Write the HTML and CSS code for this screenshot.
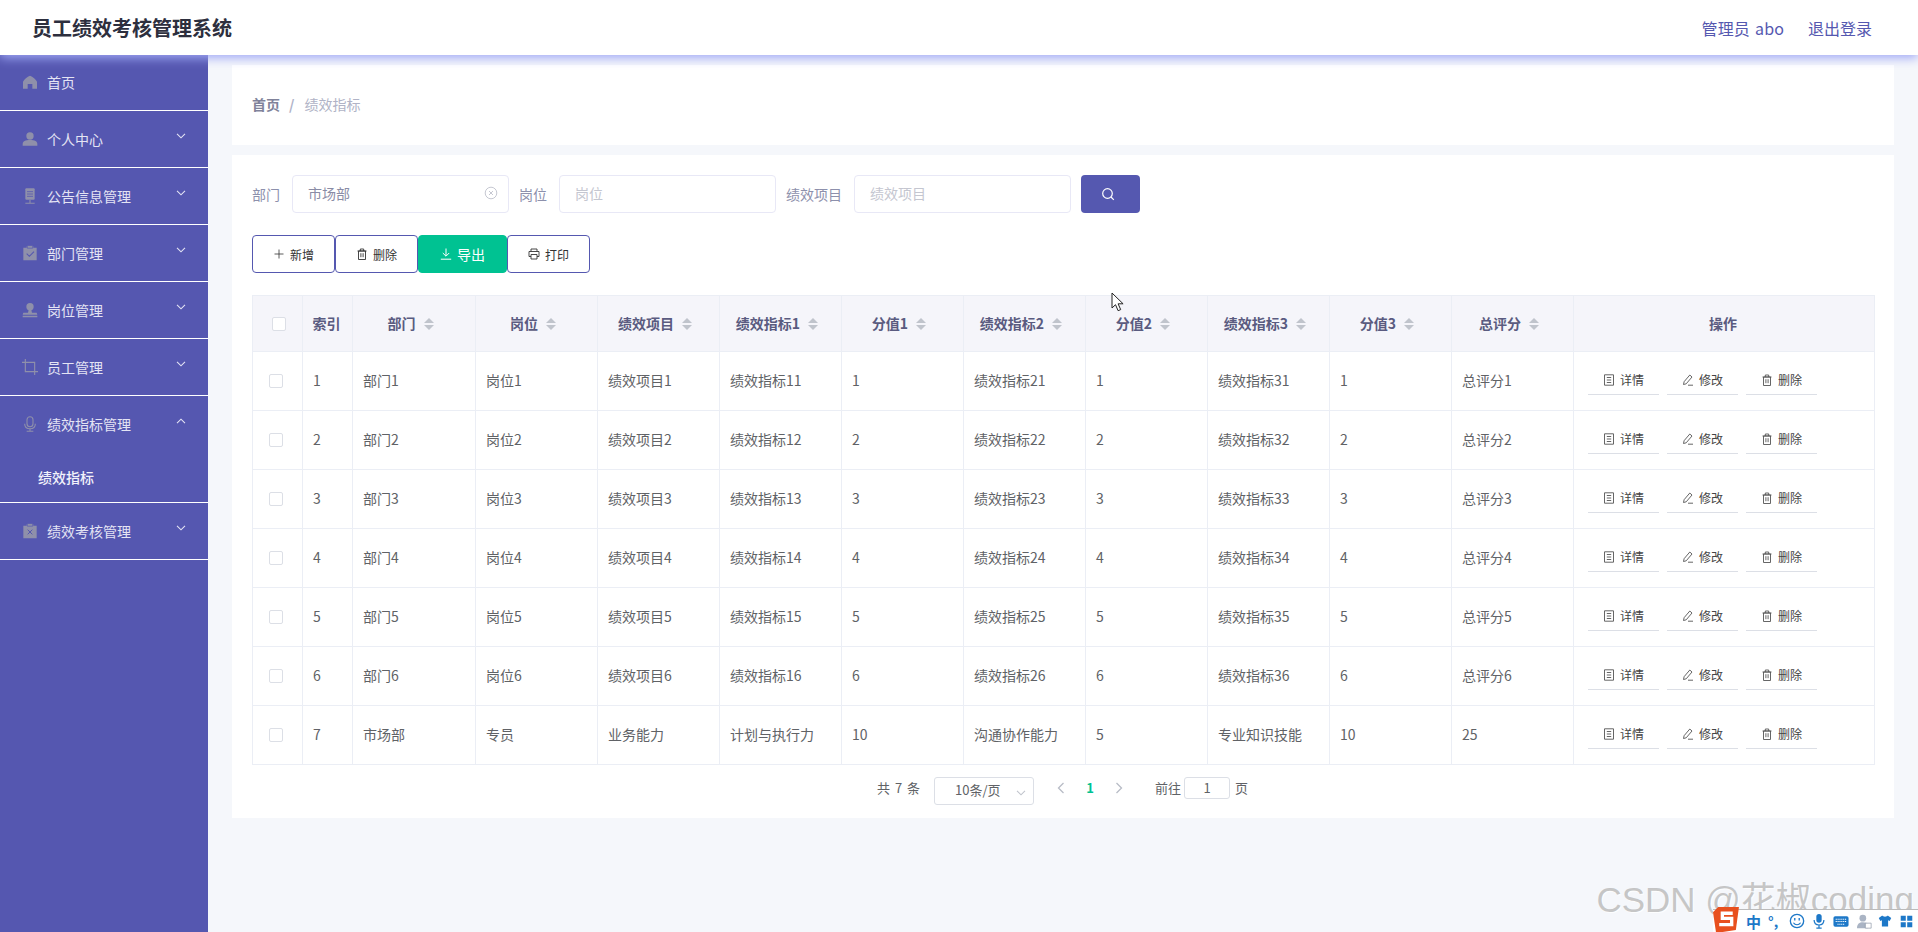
FILE: index.html
```html
<!DOCTYPE html>
<html lang="zh-CN">
<head>
<meta charset="utf-8">
<title>员工绩效考核管理系统</title>
<link rel="stylesheet" href="styles.css">
</head>
<body>
<svg class="defs" width="0" height="0" aria-hidden="true">
  <symbol id="i-home" viewBox="0 0 24 24"><path d="M12 2.500C8 4 3 8 1.500 11.500V22h7v-7h7v7h7V11.500C21 8 16 4 12 2.500z" fill="currentColor"/></symbol>
  <symbol id="i-user" viewBox="0 0 24 24"><circle cx="12" cy="7.500" r="5.500" fill="currentColor"/><path d="M1 22v-2.500C1 15.500 5 13.500 12 13.500s11 2 11 6V22z" fill="currentColor"/></symbol>
  <symbol id="i-mic1" viewBox="0 0 24 24"><path d="M6.500 0.500h11a1.500 1.500 0 0 1 1.500 1.500v14a1.500 1.500 0 0 1-1.500 1.500h-11A1.500 1.500 0 0 1 5 16V2a1.500 1.500 0 0 1 1.500-1.500z" fill="currentColor"/><path d="M7.500 5.500h9M7.500 9h9M7.500 12.500h9" stroke="#5557b0" stroke-width="1.200"/><path d="M12 18v4M5 23h14" stroke="currentColor" stroke-width="1.600" fill="none"/></symbol>
  <symbol id="i-claim" viewBox="0 0 24 24"><path d="M2 4h5V2h10v2h5v19H2z" fill="currentColor"/><path d="M8 0.800h8v4H8z" fill="currentColor" stroke="#5557b0" stroke-width="1"/><path d="M7 13l4 4 7-7" stroke="#5557b0" stroke-width="1.600" fill="none"/></symbol>
  <symbol id="i-custom" viewBox="0 0 24 24"><circle cx="12" cy="7" r="5.500" fill="currentColor"/><path d="M10 12h4l1 4h7l1 3H1l1-3h7zM1 20.500h22V23H1z" fill="currentColor"/></symbol>
  <symbol id="i-crop" viewBox="0 0 24 24"><path d="M5 0v19h19M0 5h19v19" stroke="currentColor" stroke-width="1.700" fill="none"/></symbol>
  <symbol id="i-mic2" viewBox="0 0 24 24"><rect x="7.500" y="1" width="9" height="15" rx="4.500" fill="none" stroke="currentColor" stroke-width="1.600"/><path d="M4 11.500c0 5 3.500 7.500 8 7.500s8-2.500 8-7.500M12 19v4M7 23h10" fill="none" stroke="currentColor" stroke-width="1.600"/></symbol>
  <symbol id="i-release" viewBox="0 0 24 24"><path d="M2 4h5V2h10v2h5v19H2z" fill="currentColor"/><path d="M8 0.800h8v4H8z" fill="currentColor" stroke="#5557b0" stroke-width="1"/><path d="M8.500 10l7 7M15.500 10l-7 7" stroke="#5557b0" stroke-width="1.500"/></symbol>
  <symbol id="i-down" viewBox="0 0 10 6"><path d="M1 .800l4 4 4-4" fill="none" stroke="currentColor" stroke-width="1.100"/></symbol>
  <symbol id="i-up" viewBox="0 0 10 6"><path d="M1 5.200l4-4 4 4" fill="none" stroke="currentColor" stroke-width="1.100"/></symbol>
  <symbol id="i-plus" viewBox="0 0 12 12"><path d="M6 1.500v9M1.500 6h9" stroke="currentColor" stroke-width=".8" fill="none"/></symbol>
  <symbol id="i-trash" viewBox="0 0 12 12"><path d="M2.500 3h7v8.500h-7zM1.500 3h9M4.300 3V1h3.400v2M4.900 5.200v4M7.100 5.200v4" stroke="currentColor" stroke-width=".9" fill="none"/></symbol>
  <symbol id="i-export" viewBox="0 0 12 12"><path d="M6 .500v7.500M2.800 5l3.200 3.200L9.200 5M.800 11.200h10.400" stroke="currentColor" fill="none"/></symbol>
  <symbol id="i-print" viewBox="0 0 12 12"><path d="M3 3.500V1h6v2.500M3 8.500H1V3.500h10v5H9M3 6.500h6v4.500H3z" stroke="currentColor" stroke-width=".9" fill="none"/></symbol>
  <symbol id="i-doc" viewBox="0 0 12 12"><path d="M1.500 .800h9v10.400h-9zM3.800 3.500h4.400M3.800 6h4.400M3.800 8.500h4.400" stroke="currentColor" stroke-width=".9" fill="none"/></symbol>
  <symbol id="i-edit" viewBox="0 0 12 12"><path d="M7.800 1l2.200 2L4.200 9.800 1.500 10.500l.6-2.800zM6 11.200h5" stroke="currentColor" stroke-width=".9" fill="none"/></symbol>
  <symbol id="i-clear" viewBox="0 0 14 14"><circle cx="7" cy="7" r="5.800" fill="none" stroke="currentColor"/><path d="M5 5l4 4M9 5l-4 4" stroke="currentColor"/></symbol>
  <symbol id="i-search" viewBox="0 0 14 14"><circle cx="6.500" cy="6.500" r="4.800" fill="none" stroke="currentColor" stroke-width="1.200"/><path d="M10 10l2.800 2.800" stroke="currentColor" stroke-width="1.200"/></symbol>
  <symbol id="i-left" viewBox="0 0 8 12"><path d="M6.500 1L1.500 6l5 5" fill="none" stroke="currentColor" stroke-width="1.300"/></symbol>
  <symbol id="i-right" viewBox="0 0 8 12"><path d="M1.500 1l5 5-5 5" fill="none" stroke="currentColor" stroke-width="1.300"/></symbol>
</svg>

<div class="app">
  <header class="topbar">
    <div class="brand">员工绩效考核管理系统</div>
    <nav class="top-links"><span class="who">管理员 abo</span><span>退出登录</span></nav>
  </header>

  <div class="body-row">
    <aside class="sidebar">
      <div class="menu-item first"><svg class="m-icon"><use href="#i-home"/></svg><span>首页</span></div>
      <div class="menu-item"><svg class="m-icon"><use href="#i-user"/></svg><span>个人中心</span><svg class="chev"><use href="#i-down"/></svg></div>
      <div class="menu-item"><svg class="m-icon"><use href="#i-mic1"/></svg><span>公告信息管理</span><svg class="chev"><use href="#i-down"/></svg></div>
      <div class="menu-item"><svg class="m-icon"><use href="#i-claim"/></svg><span>部门管理</span><svg class="chev"><use href="#i-down"/></svg></div>
      <div class="menu-item"><svg class="m-icon"><use href="#i-custom"/></svg><span>岗位管理</span><svg class="chev"><use href="#i-down"/></svg></div>
      <div class="menu-item"><svg class="m-icon"><use href="#i-crop"/></svg><span>员工管理</span><svg class="chev"><use href="#i-down"/></svg></div>
      <div class="menu-group">
        <div class="menu-item open"><svg class="m-icon"><use href="#i-mic2"/></svg><span>绩效指标管理</span><svg class="chev"><use href="#i-up"/></svg></div>
        <div class="sub-item">绩效指标</div>
      </div>
      <div class="menu-item"><svg class="m-icon"><use href="#i-release"/></svg><span>绩效考核管理</span><svg class="chev"><use href="#i-down"/></svg></div>
    </aside>

    <main class="main">
      <section class="crumbs card">
        <span class="crumb-home">首页</span><span class="crumb-sep">/</span><span class="crumb-cur">绩效指标</span>
      </section>

      <section class="panel card">
        <div class="search-row">
          <label class="s-label">部门</label>
          <div class="s-input filled">市场部<svg class="clear"><use href="#i-clear"/></svg></div>
          <label class="s-label">岗位</label>
          <div class="s-input">岗位</div>
          <label class="s-label">绩效项目</label>
          <div class="s-input">绩效项目</div>
          <div class="search-btn"><svg class="search-ic"><use href="#i-search"/></svg></div>
        </div>

        <div class="action-row">
          <div class="btn w83"><svg class="b-ic"><use href="#i-plus"/></svg>新增</div>
          <div class="btn w83"><svg class="b-ic"><use href="#i-trash"/></svg>删除</div>
          <div class="btn w89 green"><svg class="b-ic"><use href="#i-export"/></svg>导出</div>
          <div class="btn w83"><svg class="b-ic"><use href="#i-print"/></svg>打印</div>
        </div>

        <table class="grid">
          <colgroup><col class="c-50"><col class="c-50"><col class="c-123"><col class="c-122"><col class="c-122"><col class="c-122"><col class="c-122"><col class="c-122"><col class="c-122"><col class="c-122"><col class="c-122"><col class="c-122"><col class="c-301"></colgroup>
          <thead>
            <tr>
              <th><i class="check head"></i></th>
              <th class="th-plain">索引</th>
              <th>部门<i class="sort"></i></th>
              <th>岗位<i class="sort"></i></th>
              <th>绩效项目<i class="sort"></i></th>
              <th>绩效指标1<i class="sort"></i></th>
              <th>分值1<i class="sort"></i></th>
              <th>绩效指标2<i class="sort"></i></th>
              <th>分值2<i class="sort"></i></th>
              <th>绩效指标3<i class="sort"></i></th>
              <th>分值3<i class="sort"></i></th>
              <th>总评分<i class="sort"></i></th>
              <th class="th-plain">操作</th>
            </tr>
          </thead>
          <tbody>
            <tr><td class="cc"><i class="check"></i></td><td class="ci">1</td><td>部门1</td><td>岗位1</td><td>绩效项目1</td><td>绩效指标11</td><td>1</td><td>绩效指标21</td><td>1</td><td>绩效指标31</td><td>1</td><td>总评分1</td><td class="ops"><span class="op"><svg class="op-ic"><use href="#i-doc"/></svg>详情</span><span class="op"><svg class="op-ic"><use href="#i-edit"/></svg>修改</span><span class="op"><svg class="op-ic"><use href="#i-trash"/></svg>删除</span></td></tr>
            <tr><td class="cc"><i class="check"></i></td><td class="ci">2</td><td>部门2</td><td>岗位2</td><td>绩效项目2</td><td>绩效指标12</td><td>2</td><td>绩效指标22</td><td>2</td><td>绩效指标32</td><td>2</td><td>总评分2</td><td class="ops"><span class="op"><svg class="op-ic"><use href="#i-doc"/></svg>详情</span><span class="op"><svg class="op-ic"><use href="#i-edit"/></svg>修改</span><span class="op"><svg class="op-ic"><use href="#i-trash"/></svg>删除</span></td></tr>
            <tr><td class="cc"><i class="check"></i></td><td class="ci">3</td><td>部门3</td><td>岗位3</td><td>绩效项目3</td><td>绩效指标13</td><td>3</td><td>绩效指标23</td><td>3</td><td>绩效指标33</td><td>3</td><td>总评分3</td><td class="ops"><span class="op"><svg class="op-ic"><use href="#i-doc"/></svg>详情</span><span class="op"><svg class="op-ic"><use href="#i-edit"/></svg>修改</span><span class="op"><svg class="op-ic"><use href="#i-trash"/></svg>删除</span></td></tr>
            <tr><td class="cc"><i class="check"></i></td><td class="ci">4</td><td>部门4</td><td>岗位4</td><td>绩效项目4</td><td>绩效指标14</td><td>4</td><td>绩效指标24</td><td>4</td><td>绩效指标34</td><td>4</td><td>总评分4</td><td class="ops"><span class="op"><svg class="op-ic"><use href="#i-doc"/></svg>详情</span><span class="op"><svg class="op-ic"><use href="#i-edit"/></svg>修改</span><span class="op"><svg class="op-ic"><use href="#i-trash"/></svg>删除</span></td></tr>
            <tr><td class="cc"><i class="check"></i></td><td class="ci">5</td><td>部门5</td><td>岗位5</td><td>绩效项目5</td><td>绩效指标15</td><td>5</td><td>绩效指标25</td><td>5</td><td>绩效指标35</td><td>5</td><td>总评分5</td><td class="ops"><span class="op"><svg class="op-ic"><use href="#i-doc"/></svg>详情</span><span class="op"><svg class="op-ic"><use href="#i-edit"/></svg>修改</span><span class="op"><svg class="op-ic"><use href="#i-trash"/></svg>删除</span></td></tr>
            <tr><td class="cc"><i class="check"></i></td><td class="ci">6</td><td>部门6</td><td>岗位6</td><td>绩效项目6</td><td>绩效指标16</td><td>6</td><td>绩效指标26</td><td>6</td><td>绩效指标36</td><td>6</td><td>总评分6</td><td class="ops"><span class="op"><svg class="op-ic"><use href="#i-doc"/></svg>详情</span><span class="op"><svg class="op-ic"><use href="#i-edit"/></svg>修改</span><span class="op"><svg class="op-ic"><use href="#i-trash"/></svg>删除</span></td></tr>
            <tr><td class="cc"><i class="check"></i></td><td class="ci">7</td><td>市场部</td><td>专员</td><td>业务能力</td><td>计划与执行力</td><td>10</td><td>沟通协作能力</td><td>5</td><td>专业知识技能</td><td>10</td><td>25</td><td class="ops"><span class="op"><svg class="op-ic"><use href="#i-doc"/></svg>详情</span><span class="op"><svg class="op-ic"><use href="#i-edit"/></svg>修改</span><span class="op"><svg class="op-ic"><use href="#i-trash"/></svg>删除</span></td></tr>
          </tbody>
        </table>

        <div class="pager">
          <span class="p-total">共 7 条</span>
          <div class="p-select">10条/页<svg class="p-arrow"><use href="#i-down"/></svg></div>
          <svg class="p-nav"><use href="#i-left"/></svg>
          <span class="p-num">1</span>
          <svg class="p-nav"><use href="#i-right"/></svg>
          <span class="p-goto">前往</span>
          <div class="p-input">1</div>
          <span class="p-page">页</span>
        </div>
      </section>
    </main>
  </div>
</div>

<svg class="cursor" viewBox="0 0 13 20"><path d="M1 1v15l3.500-3.300 2.600 6 2.600-1.100-2.600-5.800h5z" fill="#fff" stroke="#222" stroke-width="1"/></svg>

<div class="watermark">CSDN @花椒coding</div>

<div class="ime">
  <svg class="ime-logo" viewBox="0 0 26 26"><path d="M5 1h20l-3 22-19 3L0 6z" fill="#e8501e"/><path d="M19 7H9v5h9v6H6" fill="none" stroke="#fff" stroke-width="3.200"/></svg>
  <span class="ime-zh">中</span>
  <span class="ime-p">°,</span>
  <svg class="ime-smile" viewBox="0 0 18 18"><circle cx="9" cy="9" r="7.500" fill="#fff" stroke="#1d78c8" stroke-width="1.500"/><path d="M6.500 5.500v3M11.500 5.500v3" stroke="#1d78c8" stroke-width="1.500"/><path d="M5 11c2 3 6 3 8 0" fill="none" stroke="#1d78c8" stroke-width="1.300"/></svg>
  <svg class="ime-mic" viewBox="0 0 18 18"><rect x="6" y="1" width="6" height="10" rx="3" fill="#1d78c8"/><path d="M3.500 8c0 4 2.500 5.500 5.500 5.500S14.500 12 14.500 8M9 13.500V17M6 17h6" fill="none" stroke="#1d78c8" stroke-width="1.400"/></svg>
  <svg class="ime-key" viewBox="0 0 18 14"><rect x=".5" y="1" width="17" height="12" rx="2" fill="#1d78c8"/><path d="M3 4.500h12M3 7h12M5 10h8" stroke="#fff" stroke-width="1.200" stroke-dasharray="1.300 .8"/></svg>
  <svg class="ime-person" viewBox="0 0 18 18"><circle cx="7" cy="5" r="4" fill="#aab4c4"/><path d="M0 17c0-5 3-7 7-7s5 1 6 2v5z" fill="#aab4c4"/><path d="M10 11h7v6h-7z" fill="#fff" stroke="#8a94a4" stroke-width=".8"/></svg>
  <svg class="ime-shirt" viewBox="0 0 18 18"><path d="M5.500 2L1 5l2 4 2-1v8h8V8l2 1 2-4-4.500-3C12 4 6 4 5.500 2z" fill="#1d78c8"/></svg>
  <svg class="ime-grid" viewBox="0 0 18 18"><path d="M1 1h7v7H1zM10 1h7v7h-7zM1 10h7v7H1zM10 10h7v7h-7z" fill="#1d78c8"/></svg>
</div>
</body>
</html>
```

FILE: styles.css
```css
* { box-sizing: border-box; }
html, body { margin: 0; height: 100%; overflow: hidden; }
body {
  font-family: "Noto Sans CJK SC", "Noto Sans", sans-serif;
  font-size: 14px;
  color: #606266;
  background: #f5f7fb;
}
.defs { position: absolute; }
.app { display: flex; flex-direction: column; height: 932px; }

.topbar {
  position: relative;
  z-index: 2;
  flex: 0 0 55px;
  display: flex;
  align-items: center;
  justify-content: space-between;
  padding: 0 46px 0 32px;
  background: #fff;
  box-shadow: 0 3px 10px rgba(160, 168, 245, 1);
}
.brand { font-size: 20px; font-weight: 700; color: #2d2f3e; line-height: 1; }
.top-links { display: flex; gap: 24px; font-size: 16px; color: #5558b0; }
.who { word-spacing: 1.5px; letter-spacing: .1px; }

.body-row { flex: 1; display: flex; min-height: 0; }

.sidebar { flex: 0 0 208px; background: #5557b0; color: #e4e4f4; }
.menu-item {
  display: flex;
  align-items: center;
  height: 57px;
  padding: 0 22px 0 22px;
  border-bottom: 1px solid #fff;
}
.menu-item.first { height: 56px; padding-bottom: 1px; }
.menu-item.open { height: 56px; border-bottom: 0; }
.menu-group { border-bottom: 1px solid #fff; }
.m-icon { width: 16px; height: 16px; margin-right: 9px; color: #8f90aa; flex: none; }
.menu-item span { flex: 1; }
.chev { width: 10px; height: 6px; color: #e4e4f4; margin-top: -6px; flex: none; }
.sub-item { height: 50px; padding: 0 0 0 38px; line-height: 50px; color: #f2f2fb; font-weight: 500; }

.main { flex: 1; min-width: 0; padding: 10px 24px 0; }
.card { background: #fff; }
.crumbs { display: flex; align-items: center; height: 80px; padding: 0 20px 2px; margin-bottom: 10px; }
.crumb-home { color: #80829a; font-weight: 700; }
.crumb-sep { margin: 0 10px 0 9px; color: #b0b3c8; font-weight: 700; }
.crumb-cur { color: #b0b3c6; }

.panel { height: 663px; padding: 20px; }
.search-row { display: flex; align-items: center; height: 38px; }
.s-label { margin-right: 12px; color: #8d90ac; }
.s-input {
  position: relative;
  width: 217px;
  height: 38px;
  margin-right: 10px;
  padding: 0 15px;
  line-height: 34px;
  color: #c4c6d0;
  border: 1px solid #e8e8f6;
  border-radius: 4px;
}
.s-input.filled { color: #8a8ca6; }
.clear { position: absolute; right: 10px; top: 10px; width: 14px; height: 14px; color: #c6c8d2; }
.search-btn {
  display: flex;
  align-items: center;
  justify-content: center;
  width: 59px;
  height: 38px;
  padding-right: 6px;
  background: #5558b0;
  border-radius: 4px;
}
.search-ic { width: 14px; height: 14px; color: #fff; }

.action-row { display: flex; margin: 22px 0; }
.btn {
  display: flex;
  align-items: center;
  justify-content: center;
  height: 38px;
  font-size: 12px;
  color: #333;
  background: #fff;
  border: 1px solid #5558b0;
  border-radius: 4px;
}
.w83 { width: 83px; }
.w89 { width: 89px; }
.btn.green { background: #00c292; border-color: #00c292; color: #fff; font-size: 14px; }
.b-ic { width: 12px; height: 12px; margin-right: 5px; }

.grid {
  width: 1622px;
  table-layout: fixed;
  border-collapse: collapse;
}
.c-50 { width: 50px; }
.c-123 { width: 123px; }
.c-122 { width: 122px; }
.c-301 { width: 301px; }
.grid th, .grid td { border: 1px solid #ebeef5; padding: 0; }
.grid th {
  height: 56px;
  padding: 0 7px 2px 0;
  background: #f5f5fa;
  color: #5a5b80;
  font-size: 14px;
  font-weight: 700;
  text-align: center;
}
.grid th.th-plain { padding: 0 2px 2px 0; }
.grid td { height: 59px; padding: 0 0 2px 10px; color: #606266; }
.grid td.cc { padding: 0 0 0 16px; }
.grid td.ci { padding-left: 10px; }
.grid th:first-child { padding: 0 0 0 3px; }
.check {
  display: block;
  width: 14px;
  height: 14px;
  background: #fff;
  border: 1px solid #dcdfe6;
  border-radius: 2px;
}
.check.head { margin: 0 auto; }
.sort {
  display: inline-block;
  position: relative;
  width: 10px;
  height: 12px;
  margin-left: 8px;
  vertical-align: -1px;
}
.sort::before, .sort::after {
  content: "";
  position: absolute;
  left: 0;
  border-left: 5px solid transparent;
  border-right: 5px solid transparent;
}
.sort::before { top: 0; border-bottom: 5px solid #c0c4cc; }
.sort::after { bottom: 0; border-top: 5px solid #c0c4cc; }

.grid td.ops { padding: 0 0 0 14px; white-space: nowrap; font-size: 0; }
.op {
  display: inline-flex;
  align-items: center;
  justify-content: center;
  width: 71px;
  height: 28px;
  margin-right: 8px;
  padding-bottom: 2px;
  font-size: 12px;
  color: #444;
  border-bottom: 1px solid #dcdfe6;
  vertical-align: middle;
}
.op-ic { width: 12px; height: 12px; margin-right: 5px; color: #555; }

.pager { display: flex; align-items: center; height: 46px; padding-left: 625px; font-size: 13px; color: #606266; }
.p-total { width: 57px; word-spacing: 2px; padding-bottom: 2px; }
.p-select {
  position: relative;
  width: 100px;
  height: 28px;
  padding-left: 20px;
  line-height: 24px;
  margin-top: 6px;
  border: 1px solid #dcdfe6;
  border-radius: 3px;
}
.p-arrow { position: absolute; right: 7px; top: 12px; width: 10px; height: 6px; color: #c0c4cc; }
.p-nav { width: 8px; height: 12px; color: #b8bcc6; flex: none; }
.p-select + .p-nav { margin-left: 23px; }
.p-num { width: 50px; text-align: center; color: #00c292; font-weight: 700; padding-bottom: 2px; }
.p-goto { margin-left: 32px; margin-right: 3px; padding-bottom: 2px; }
.p-page { padding-bottom: 2px; }
.p-input {
  width: 46px;
  height: 22px;
  line-height: 19px;
  text-align: center;
  border: 1px solid #dcdfe6;
  border-radius: 3px;
  margin-right: 5px;
}

.cursor { position: absolute; left: 1111px; top: 292px; width: 13px; height: 20px; z-index: 5; }
.watermark {
  position: absolute;
  right: 4px;
  top: 880px;
  z-index: 4;
  font-family: "Liberation Sans", "Noto Sans CJK SC", sans-serif;
  font-size: 35px;
  line-height: 40px;
  white-space: nowrap;
  color: rgba(180, 180, 180, .75);
  text-shadow: 1px 1px 1px rgba(255, 255, 255, .9);
}
.ime {
  position: absolute;
  left: 1713px;
  top: 909px;
  z-index: 6;
  display: flex;
  align-items: center;
  width: 205px;
  height: 23px;
  padding-left: 33px;
  background: #fff;
  border-top: 1px solid #bbb;
}
.ime-logo { position: absolute; left: 0; top: -4px; width: 27px; height: 27px; }
.ime-zh { width: 15px; color: #1d78c8; font-weight: 700; font-size: 15px; line-height: 1; }
.ime-p { width: 13px; margin-left: 7px; color: #1d78c8; font-weight: 700; font-size: 14px; line-height: 1; }
.ime-smile { width: 16px; height: 16px; margin-left: 8px; flex: none; }
.ime-mic { width: 16px; height: 16px; margin-left: 6px; flex: none; }
.ime-key { width: 16px; height: 13px; margin-left: 6px; flex: none; }
.ime-person { width: 15px; height: 15px; margin-left: 8px; flex: none; }
.ime-shirt { width: 14px; height: 14px; margin-left: 6px; flex: none; }
.ime-grid { width: 13px; height: 13px; margin-left: 8px; flex: none; }
```
